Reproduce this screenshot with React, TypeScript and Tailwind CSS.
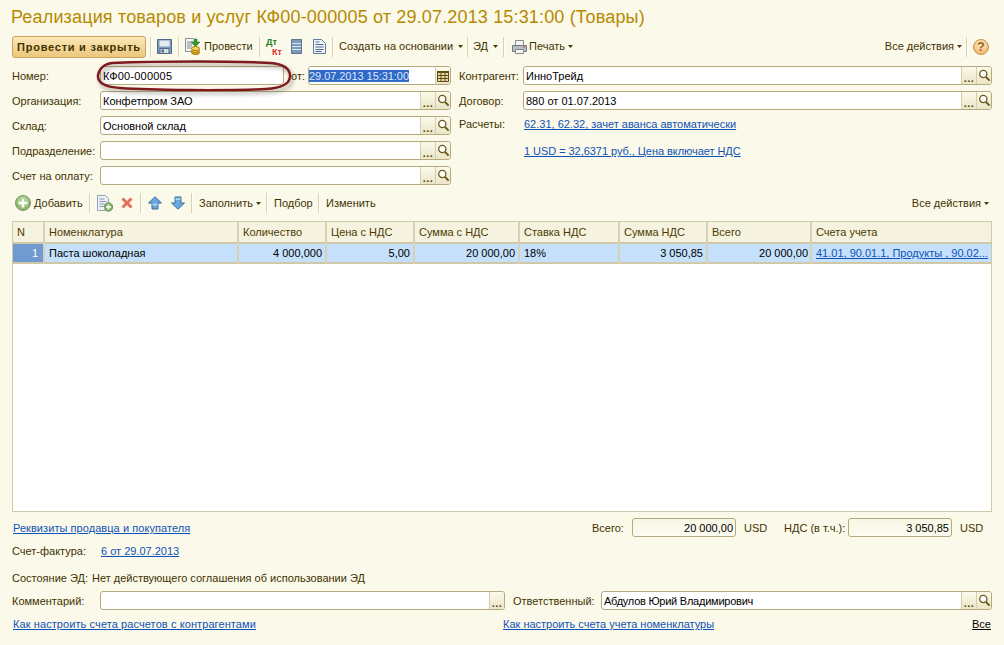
import React from "react";

const Sep = ({ className = "" }: { className?: string }) => (
  <div className={`w-[2px] h-[20px] border-l border-[#d8d2ae] bg-[#fffef6] shrink-0 ${className}`} />
);

const Arrow = ({ className = "" }: { className?: string }) => (
  <svg width="5" height="3" viewBox="0 0 5 3" className={`shrink-0 ${className}`}>
    <path d="M0 0h5L2.5 3z" fill="#4a3c00" />
  </svg>
);

const SearchIcon = () => (
  <svg width="13" height="13" viewBox="0 0 13 13">
    <circle cx="5.3" cy="5" r="3.6" fill="#fff" stroke="#6b5a1c" strokeWidth="1.3" />
    <path d="M8 8l3.6 3.6" stroke="#6b5a1c" strokeWidth="2" />
  </svg>
);

const CalendarIcon = () => (
  <svg width="12" height="12" viewBox="0 0 12 12">
    <path d="M.5 1.5h11v10H.5z" fill="#e8ddb0" stroke="#5f4f14" />
    <path d="M0 1h12v2H0z" fill="#5f4f14" />
    <path d="M0 5.5h12M0 8.5h12M4 3v8M8 3v8" stroke="#5f4f14" />
  </svg>
);

const FieldButton = ({ children }: { children: React.ReactNode }) => (
  <div className="w-[15px] h-full flex items-center justify-center border-l border-[#d5cfae] bg-gradient-to-b from-[#fbf9ea] to-[#ebe6c8] shrink-0">
    {children}
  </div>
);

const Dots = () => (
  <span className="text-[#5a4a10] font-bold text-[11px] leading-none tracking-[0.5px] mt-[6px]">...</span>
);

type FieldProps = {
  value?: string;
  className?: string;
  dots?: boolean;
  search?: boolean;
};

const Field = ({ value = "", className = "", dots = true, search = true }: FieldProps) => (
  <div className={`h-[19px] flex items-stretch bg-white border border-[#b5aa7d] rounded-[3px] overflow-hidden ${className}`}>
    <div className="flex-1 pl-[2px] leading-[19px] text-black whitespace-nowrap overflow-hidden">{value}</div>
    {dots && (
      <FieldButton>
        <Dots />
      </FieldButton>
    )}
    {search && (
      <FieldButton>
        <SearchIcon />
      </FieldButton>
    )}
  </div>
);

const Label = ({ children, className = "" }: { children: React.ReactNode; className?: string }) => (
  <div className={`text-[#3f3300] leading-[21px] whitespace-nowrap shrink-0 ${className}`}>{children}</div>
);

const A = ({ children, className = "" }: { children: React.ReactNode; className?: string }) => (
  <a className={`text-[#0f52b8] underline whitespace-nowrap ${className}`}>{children}</a>
);

const FormRow = ({ label, value }: { label: string; value?: string }) => (
  <div className="flex h-[19px]">
    <Label className="w-[88px]">{label}</Label>
    <Field value={value} className="w-[351px]" />
  </div>
);

const Total = ({ value }: { value: string }) => (
  <div className="w-[104px] h-[19px] border border-[#b5aa7d] rounded-[3px] bg-gradient-to-b from-[#f8f6e4] to-[#fdfcf3] text-right pr-[2px] leading-[19px] text-black shrink-0">
    {value}
  </div>
);

const SaveIcon = () => (
  <svg width="15" height="15" viewBox="0 0 15 15" className="shrink-0">
    <path d="M.5.5h14v14H.5z" fill="#7d9ab8" stroke="#4f6a86" />
    <path d="M2.5 1.5h10v6h-10z" fill="#e4ecf4" />
    <path d="M3 9.5h9v5H3z" fill="#d7dfe8" stroke="#4f6a86" />
    <path d="M4.5 10.5h2.500v3h-2.500z" fill="#55708c" />
  </svg>
);

const PostIcon = () => (
  <svg width="16" height="17" viewBox="0 0 16 17" className="shrink-0">
    <path d="M.5.500h8l2 2v11h-10z" fill="#f6f6f0" stroke="#8a8f96" />
    <path d="M2 4h6M2 6h5M2 8h5M2 10h4" stroke="#7d8ca0" />
    <path d="M9 1h3v3h3l-4.500 4.500L6 4h3z" fill="#2f9a34" stroke="#1d6e22" strokeWidth=".5" />
    <ellipse cx="10.500" cy="14.500" rx="4" ry="2" fill="#d9a520" stroke="#a67a10" />
    <ellipse cx="10.500" cy="12.500" rx="4" ry="2" fill="#efc23e" stroke="#a67a10" />
    <ellipse cx="10.500" cy="10.500" rx="4" ry="2" fill="#f7d65c" stroke="#a67a10" />
  </svg>
);

const DtKtIcon = () => (
  <div className="w-[16px] h-[20px] flex flex-col font-bold text-[9px] leading-[10px] shrink-0">
    <span className="text-[#1f7d1f]">Дт</span>
    <span className="text-[#e8262a] self-end">Кт</span>
  </div>
);

const ListIcon = () => (
  <svg width="11" height="15" viewBox="0 0 11 15" className="shrink-0">
    <path d="M.5.500h10v14H.5z" fill="#7d9ab8" stroke="#5c7692" />
    <path d="M1 4.500h9M1 7.500h9M1 10.500h9" stroke="#dbe5ef" />
  </svg>
);

const DocIcon = () => (
  <svg width="13" height="15" viewBox="0 0 13 15" className="shrink-0">
    <path d="M.5.500h8l4 4v10H.5z" fill="#eef3f9" stroke="#5f7c9c" />
    <path d="M2.500 3h4M2.500 5.500h8M2.500 8h8M2.500 10.500h8M2.500 12.500h6" stroke="#506b8a" />
  </svg>
);

const PrintIcon = () => (
  <svg width="15" height="14" viewBox="0 0 15 14" className="shrink-0">
    <path d="M3.500.500h8v5h-8z" fill="#f4f4f4" stroke="#8b8b8b" />
    <path d="M.5 5.500h14v6H.5z" fill="#b9bcc0" stroke="#74777c" />
    <path d="M3.500 9.500h8v4h-8z" fill="#f4f4f4" stroke="#8b8b8b" />
    <path d="M11 7h2" stroke="#c9542f" />
  </svg>
);

const AddIcon = () => (
  <svg width="16" height="16" viewBox="0 0 16 16" className="shrink-0">
    <circle cx="8" cy="8" r="7.500" fill="#8fbb6c" stroke="#7f8f76" />
    <circle cx="8" cy="6.500" r="5.500" fill="#a9cf8a" />
    <path d="M8 3.500v9M3.500 8h9" stroke="#fff" strokeWidth="2.400" />
  </svg>
);

const DocAddIcon = () => (
  <svg width="16" height="17" viewBox="0 0 16 17" className="shrink-0">
    <path d="M.5.500h8l3 3v12H.5z" fill="#eef3f9" stroke="#8fa3b8" />
    <path d="M2.500 4h5M2.500 6.500h7M2.500 9h5M2.500 11.500h4" stroke="#8198b0" />
    <circle cx="11.500" cy="12" r="4.200" fill="#84b562" stroke="#6f8f5c" />
    <path d="M11.500 9.500v5M9 12h5" stroke="#fff" strokeWidth="1.500" />
  </svg>
);

const CrossIcon = () => (
  <svg width="12" height="12" viewBox="0 0 12 12" className="shrink-0">
    <path d="M1.500 1.500l9 9M10.500 1.500l-9 9" stroke="#e4705c" strokeWidth="3" />
  </svg>
);

const UpIcon = () => (
  <svg width="14" height="14" viewBox="0 0 14 14" className="shrink-0">
    <path d="M7 .8L13.500 7H10v6H4V7H.5z" fill="#6aa8dc" stroke="#3a6f9f" strokeLinejoin="round" />
    <path d="M4.500 7.500h5v2h-5z" fill="#a9d1f0" />
  </svg>
);

const DownIcon = () => (
  <svg width="14" height="14" viewBox="0 0 14 14" className="shrink-0">
    <path d="M7 13.200L13.500 7H10V1H4v6H.5z" fill="#6aa8dc" stroke="#3a6f9f" strokeLinejoin="round" />
    <path d="M4.500 2h5v2h-5z" fill="#a9d1f0" />
  </svg>
);

const columns = [
  { name: "N", w: 31 },
  { name: "Номенклатура", w: 194 },
  { name: "Количество", w: 88 },
  { name: "Цена с НДС", w: 88 },
  { name: "Сумма с НДС", w: 105 },
  { name: "Ставка НДС", w: 100 },
  { name: "Сумма НДС", w: 88 },
  { name: "Всего", w: 104 },
  { name: "Счета учета", w: 181 },
];

export default function App() {
  return (
    <div className="relative w-[1004px] h-[645px] overflow-hidden bg-[#fbf9ea] text-[11px] text-[#3f3300] font-['Liberation_Sans',Arial,sans-serif] flex flex-col">
      <h1 className="h-[35px] pl-[11px] text-[18px] tracking-[0.16px] leading-[35px] text-[#b58a00] whitespace-nowrap">
        Реализация товаров и услуг КФ00-000005 от 29.07.2013 15:31:00 (Товары)
      </h1>

      <div className="h-[23px] flex items-center pl-[12px] pr-[15px]">
        <div className="w-[134px] h-[22px] rounded-[3px] border border-[#c9a55c] bg-gradient-to-b from-[#fbe7b8] to-[#ecc67c] text-center font-bold text-[#3f3300] leading-[20px] tracking-[0.75px] whitespace-nowrap shrink-0">
          Провести и закрыть
        </div>
        <Sep className="ml-[4px]" />
        <div className="ml-[5px]"><SaveIcon /></div>
        <Sep className="ml-[6px]" />
        <div className="ml-[5px]"><PostIcon /></div>
        <span className="ml-[3px] w-[50px] shrink-0">Провести</span>
        <Sep className="ml-[5px]" />
        <div className="ml-[5px]"><DtKtIcon /></div>
        <div className="ml-[9px]"><ListIcon /></div>
        <div className="ml-[11px]"><DocIcon /></div>
        <Sep className="ml-[6px]" />
        <span className="ml-[5px] w-[116px] shrink-0 whitespace-nowrap">Создать на основании</span>
        <Arrow className="ml-[3px]" />
        <Sep className="ml-[4px]" />
        <span className="ml-[4px] w-[18px] shrink-0">ЭД</span>
        <Arrow className="ml-[2px]" />
        <Sep className="ml-[5px]" />
        <div className="ml-[7px]"><PrintIcon /></div>
        <span className="ml-[2px] w-[37px] shrink-0">Печать</span>
        <Arrow className="ml-[2px]" />
        <span className="ml-auto whitespace-nowrap">Все действия</span>
        <Arrow className="ml-[3px]" />
        <Sep className="ml-[4px]" />
        <div className="ml-[5px] w-[16px] h-[16px] rounded-full border border-[#c98f4a] bg-[radial-gradient(circle_at_50%_30%,#fff1d0,#eda850)] text-center text-[12px] font-bold leading-[14px] text-[#9a5a10] shrink-0">
          ?
        </div>
      </div>

      <div className="mt-[8px] pl-[12px] flex">
        <div className="w-[439px] flex flex-col gap-[6px] shrink-0">
          <div className="flex h-[19px]">
            <Label className="w-[88px]">Номер:</Label>
            <Field value="КФ00-000005" className="w-[184px] tracking-[0.2px]" dots={false} search={false} />
            <Label className="ml-[7px] w-[17px]">от:</Label>
            <div className="w-[143px] h-[19px] flex items-stretch bg-white border border-[#b5aa7d] rounded-[3px] overflow-hidden">
              <div className="flex-1 leading-[19px] whitespace-nowrap overflow-hidden tracking-[-0.05px]">
                <span className="bg-[#3169c6] text-[#dfe8ff]">29.07.2013 15:31:00</span>
              </div>
              <FieldButton>
                <CalendarIcon />
              </FieldButton>
            </div>
          </div>
          <FormRow label="Организация:" value="Конфетпром ЗАО" />
          <FormRow label="Склад:" value="Основной склад" />
          <FormRow label="Подразделение:" />
          <FormRow label="Счет на оплату:" />
        </div>

        <div className="ml-[8px] w-[533px] flex flex-col gap-[6px]">
          <div className="flex h-[19px]">
            <Label className="w-[64px]">Контрагент:</Label>
            <Field value="ИнноТрейд" className="w-[469px]" />
          </div>
          <div className="flex h-[19px]">
            <Label className="w-[64px]">Договор:</Label>
            <Field value="880 от 01.07.2013" className="w-[469px]" />
          </div>
          <div className="flex h-[19px] -mt-[2px]">
            <Label className="w-[65px]">Расчеты:</Label>
            <A className="leading-[21px]">62.31, 62.32, зачет аванса автоматически</A>
          </div>
          <div className="flex h-[19px] pl-[65px] mt-[2px]">
            <A className="leading-[21px] tracking-[-0.05px]">1 USD = 32,6371 руб., Цена включает НДС</A>
          </div>
        </div>
      </div>

      <div className="h-[20px] mt-[8px] flex items-center pl-[15px] pr-[15px]">
        <AddIcon />
        <span className="ml-[3px] w-[50px] shrink-0">Добавить</span>
        <Sep className="ml-[5px]" />
        <div className="ml-[6px]"><DocAddIcon /></div>
        <div className="ml-[8px]"><CrossIcon /></div>
        <Sep className="ml-[7px]" />
        <div className="ml-[6px]"><UpIcon /></div>
        <div className="ml-[9px]"><DownIcon /></div>
        <Sep className="ml-[6px]" />
        <span className="ml-[6px] w-[54px] shrink-0">Заполнить</span>
        <Arrow className="ml-[3px]" />
        <Sep className="ml-[5px]" />
        <span className="ml-[6px] w-[38px] shrink-0">Подбор</span>
        <Sep className="ml-[6px]" />
        <span className="ml-[6px] shrink-0">Изменить</span>
        <span className="ml-auto whitespace-nowrap">Все действия</span>
        <Arrow className="ml-[3px]" />
      </div>

      <div className="mt-[8px] mx-[12px] h-[291px] bg-white border border-[#cfc9a9] overflow-hidden">
        <table className="table-fixed border-collapse w-[979px]">
          <colgroup>
            {columns.map((col) => (
              <col key={col.name} style={{ width: col.w }} />
            ))}
          </colgroup>
          <thead>
            <tr className="h-[21px] bg-[#f5f2df] border-b-2 border-[#cfc9a9]">
              {columns.map((col) => (
                <th key={col.name} className="border-r-2 border-[#d8d2b4] last:border-r-0 pl-[4px] text-left font-normal text-[#4a3c00]">
                  {col.name}
                </th>
              ))}
            </tr>
          </thead>
          <tbody>
            <tr className="h-[19px] bg-[#c5e0fb] border-b-2 border-[#cfc9a9] text-black [&>td]:pt-[1px]">
              <td className="bg-[#6f9bd0] text-white text-right pr-[5px] border-r-2 border-[#d8d2b4]">1</td>
              <td className="pl-[4px] border-r-2 border-[#d8d2b4]">Паста шоколадная</td>
              <td className="pr-[3px] text-right border-r-2 border-[#d8d2b4]">4 000,000</td>
              <td className="pr-[3px] text-right border-r-2 border-[#d8d2b4]">5,00</td>
              <td className="pr-[3px] text-right border-r-2 border-[#d8d2b4]">20 000,00</td>
              <td className="pl-[4px] border-r-2 border-[#d8d2b4]">18%</td>
              <td className="pr-[3px] text-right border-r-2 border-[#d8d2b4]">3 050,85</td>
              <td className="pr-[2px] text-right border-r-2 border-[#d8d2b4]">20 000,00</td>
              <td className="pl-[4px] whitespace-nowrap overflow-hidden">
                <A>41.01, 90.01.1, Продукты , 90.02...</A>
              </td>
            </tr>
          </tbody>
        </table>
      </div>

      <div className="mt-[6px] pl-[13px] flex h-[19px]">
        <A className="leading-[21px] w-[579px] tracking-[0.06px]">Реквизиты продавца и покупателя</A>
        <Label className="w-[40px]">Всего:</Label>
        <Total value="20 000,00" />
        <Label className="ml-[8px] w-[40px]">USD</Label>
        <Label className="w-[64px]">НДС (в т.ч.):</Label>
        <Total value="3 050,85" />
        <Label className="ml-[8px]">USD</Label>
      </div>

      <div className="mt-[4px] pl-[12px] flex h-[19px]">
        <Label className="w-[89px]">Счет-фактура:</Label>
        <A className="leading-[21px]">6 от 29.07.2013</A>
      </div>

      <div className="mt-[8px] pl-[12px] flex h-[19px]">
        <Label className="w-[80px]">Состояние ЭД:</Label>
        <Label>Нет действующего соглашения об использовании ЭД</Label>
      </div>

      <div className="mt-[4px] pl-[12px] flex h-[19px]">
        <Label className="w-[88px]">Комментарий:</Label>
        <Field className="w-[405px]" search={false} />
        <Label className="ml-[8px] w-[88px]">Ответственный:</Label>
        <Field value="Абдулов Юрий Владимирович" className="w-[391px] tracking-[-0.24px]" />
      </div>

      <div className="mt-[4px] pl-[13px] pr-[13px] flex h-[19px]">
        <A className="leading-[21px] w-[490px] tracking-[0.09px]">Как настроить счета расчетов с контрагентами</A>
        <A className="leading-[21px]">Как настроить счета учета номенклатуры</A>
        <a className="ml-auto underline text-black leading-[21px]">Все</a>
      </div>

      <svg width="210" height="36" viewBox="0 0 210 36" fill="none" className="absolute left-[90px] top-[58px] [filter:drop-shadow(2px_3px_2px_rgba(0,0,0,0.35))]">
        <path d="M22 5C70 3 150 3 180 5C194 6 200 11 200 18C200 26 192 30 176 31C130 33 60 32 30 30C14 29 7 24 8 17C9 11 14 6 22 5Z" stroke="#7e1a1f" strokeWidth="2.4" />
      </svg>
    </div>
  );
}
